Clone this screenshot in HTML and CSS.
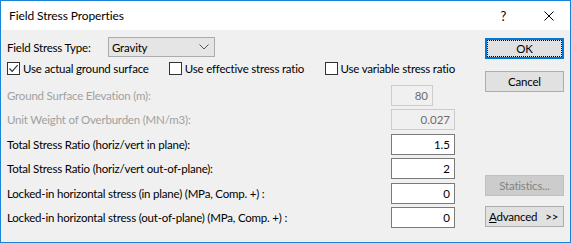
FILE: index.html
```html
<!DOCTYPE html>
<html>
<head>
<meta charset="utf-8">
<link rel="stylesheet" href="styles.css">
</head>
<body>
<div class="window">
  <div class="titlebar">
    <span class="title">Field Stress Properties</span>
    <span class="help">?</span>
    <svg class="close" width="10" height="10" viewBox="0 0 10 10"><path d="M0.5 0.5 L9.5 9.5 M9.5 0.5 L0.5 9.5" stroke="#000" stroke-width="1" fill="none"/></svg>
  </div>
  <div class="client">
    <div class="form">
      <div class="row-type">
        <span class="type-label">Field Stress Type:</span>
        <div class="select">
          <span>Gravity</span>
          <svg class="chev" width="10" height="6" viewBox="0 0 10 6"><path d="M0.5 0.5 L5 5 L9.5 0.5" stroke="#555" stroke-width="1" fill="none"/></svg>
        </div>
      </div>
      <div class="row-checks">
        <label class="check c1"><span class="box checked"><svg width="11" height="11" viewBox="0 0 11 11"><path d="M1.5 5.5 L4.2 8.3 L9.6 2.2" stroke="#333" stroke-width="1.2" fill="none"/></svg></span>Use actual ground surface</label>
        <label class="check c2"><span class="box"></span>Use effective stress ratio</label>
        <label class="check c3"><span class="box"></span>Use variable stress ratio</label>
      </div>
      <div class="fields">
        <div class="field disabled"><span>Ground Surface Elevation (m):</span><div class="input short">80</div></div>
        <div class="field disabled"><span>Unit Weight of Overburden (MN/m3):</span><div class="input">0.027</div></div>
        <div class="field"><span>Total Stress Ratio (horiz/vert in plane):</span><div class="input">1.5</div></div>
        <div class="field"><span>Total Stress Ratio (horiz/vert out-of-plane):</span><div class="input">2</div></div>
        <div class="field"><span>Locked-in horizontal stress (in plane) (MPa, Comp. +) :</span><div class="input">0</div></div>
        <div class="field"><span>Locked-in horizontal stress (out-of-plane) (MPa, Comp. +) :</span><div class="input">0</div></div>
      </div>
    </div>
    <div class="buttons">
      <div class="btn default">OK</div>
      <div class="btn cancel">Cancel</div>
      <div class="btn stats">Statistics...</div>
      <div class="btn adv"><span><u>A</u>dvanced</span><span class="arrows">&gt;&gt;</span></div>
    </div>
  </div>
</div>
</body>
</html>
```

FILE: styles.css
```css
html, body {
  margin: 0;
  padding: 0;
  background: #ffffff;
}
body {
  font-family: Lato, "Liberation Sans", sans-serif;
  font-size: 11.5px;
  letter-spacing: -0.2px;
  color: #000;
  white-space: nowrap;
}
.window {
  width: 571px;
  height: 243px;
  box-sizing: border-box;
  border: 1px solid #1883d7;
  display: flex;
  flex-direction: column;
  background: #f0f0f0;
}
.titlebar {
  height: 29px;
  background: #ffffff;
  display: flex;
  align-items: center;
  flex: none;
}
.title {
  margin-left: 8px;
  font-size: 12px;
  letter-spacing: -0.1px;
  flex: 1;
}
.help {
  font-size: 13px;
  margin-right: 38px;
}
.close {
  margin-right: 16px;
}
.client {
  flex: 1;
  display: flex;
  padding-left: 6px;
}
.form {
  width: 448px;
  display: flex;
  flex-direction: column;
  padding-top: 7px;
}
.row-type {
  display: flex;
  align-items: center;
  height: 20px;
}
.type-label {
  width: 101px;
}
.select {
  width: 107px;
  height: 20px;
  box-sizing: border-box;
  background: #e5e5e5;
  border: 1px solid #acacac;
  display: flex;
  align-items: center;
  padding-left: 3px;
  padding-right: 5px;
  justify-content: space-between;
}
.row-checks {
  display: flex;
  align-items: center;
  height: 21px;
  margin-top: 1px;
}
.check {
  display: flex;
  align-items: center;
}
.c1 { width: 162px; }
.c2 { width: 156px; }
.box {
  width: 13px;
  height: 13px;
  box-sizing: border-box;
  border: 1px solid #333;
  background: #fff;
  margin-right: 3px;
  display: flex;
  align-items: center;
  justify-content: center;
}
.fields {
  margin-top: 6px;
  display: flex;
  flex-direction: column;
  gap: 3.4px;
}
.field {
  display: flex;
  align-items: center;
  justify-content: space-between;
  height: 21px;
}
.field.disabled span {
  color: #a0a0a0;
}
.input {
  width: 64px;
  height: 21px;
  box-sizing: border-box;
  border: 1px solid #7a7a7a;
  background: #fff;
  text-align: right;
  padding-right: 4px;
  line-height: 19px;
  margin-left: auto;
  letter-spacing: 0;
}
.field.disabled .input {
  background: #f0f0f0;
  border-color: #cccccc;
  color: #6d6d6d;
}
.input.short {
  width: 42px;
  margin-right: 22px;
}
.buttons {
  margin-left: 30px;
  padding-top: 8px;
  display: flex;
  flex-direction: column;
}
.btn {
  width: 79px;
  height: 21px;
  box-sizing: border-box;
  border: 1px solid #adadad;
  background: #e1e1e1;
  display: flex;
  align-items: center;
  justify-content: center;
}
.btn.default {
  border: 2px solid #0078d7;
  outline: 1px dotted #000;
  outline-offset: -3px;
}
.btn.cancel {
  margin-top: 12px;
}
.btn.stats {
  margin-top: 83px;
  background: #cccccc;
  border-color: #bfbfbf;
  color: #838383;
}
.btn.adv {
  margin-top: 10px;
  justify-content: flex-start;
  padding-left: 3px;
}
.arrows {
  margin-left: 8px;
}
```
